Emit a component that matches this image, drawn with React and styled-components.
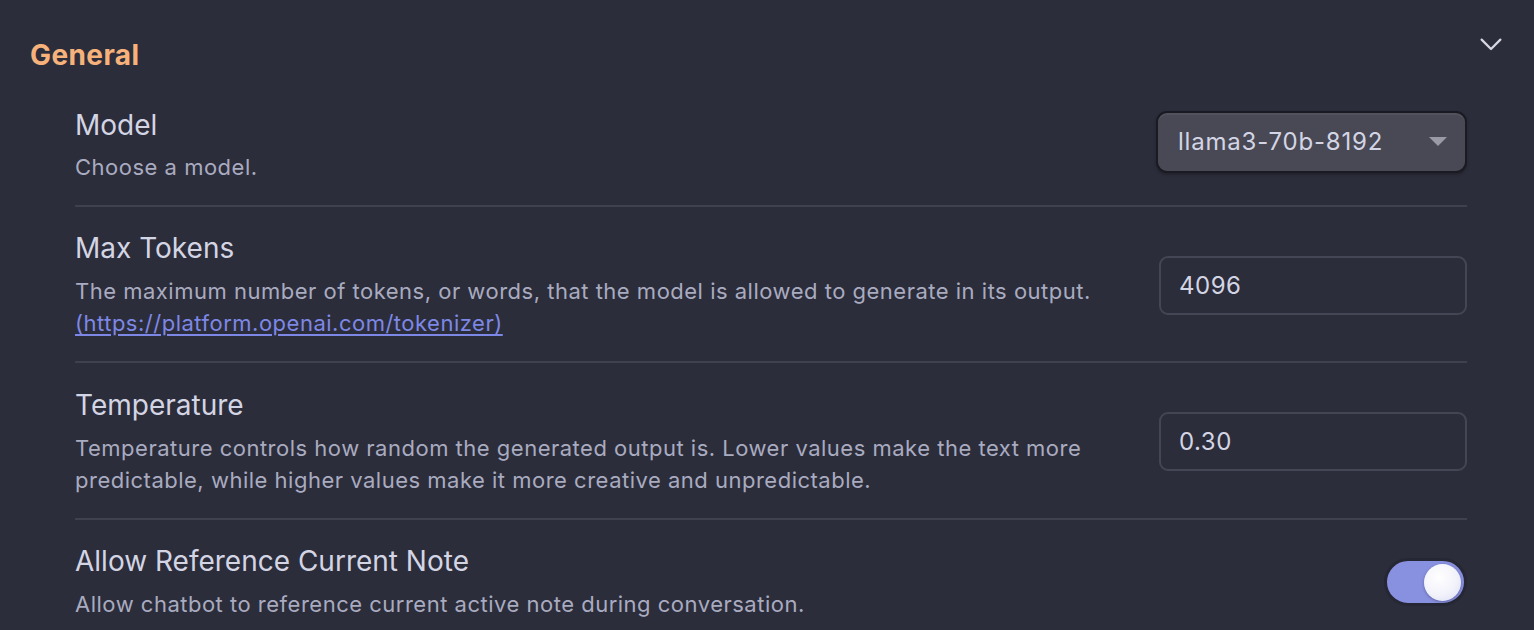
import React from "react";
import styled, { createGlobalStyle } from "styled-components";

const Global = createGlobalStyle`
  html, body { margin: 0; padding: 0; background: #2c2d3a; }
  body { font-family: Inter, "Noto Sans", sans-serif; }
  * { box-sizing: border-box; }
`;

const Page = styled.div`
  width: 1534px;
  height: 630px;
  overflow: hidden;
  background: #2c2d3a;
  padding: 0 0 0 30px;
`;

const SectionHeader = styled.div`
  display: flex;
  align-items: center;
  justify-content: space-between;
  height: 100px;
  padding-right: 28px;
  padding-top: 10px;
`;

const SectionTitle = styled.h2`
  margin: 0;
  font-size: 28px;
  font-weight: 700;
  color: #f6b27a;
  letter-spacing: 0.4px;
`;

const Chevron = styled.svg`
  width: 30px;
  height: 30px;
  margin-top: -22px;
`;

const List = styled.div`
  margin-left: 45px;
  width: 1392px;
`;

const Row = styled.div`
  display: flex;
  align-items: center;
  justify-content: space-between;
  min-height: ${(p) => p.$h}px;
  border-bottom: ${(p) => (p.$last ? "none" : "2px solid #3f414e")};
  padding: ${(p) => p.$pad || "0"};
`;

const Info = styled.div`
  display: flex;
  flex-direction: column;
  gap: ${(p) => p.$gap || 10}px;
`;

const Title = styled.div`
  font-size: 28px;
  color: #d4d5e4;
  letter-spacing: 0;
  line-height: 34px;
`;

const Desc = styled.div`
  font-size: 22px;
  color: #a9abc0;
  line-height: 32px;
  max-width: 1040px;
  letter-spacing: 0.5px;
`;

const Link = styled.a`
  color: #7d88e6;
  text-decoration: underline;
  text-underline-offset: 3px;
`;

const Select = styled.div`
  width: 311px;
  height: 62px;
  margin-top: -8px;
  border-radius: 11px;
  background: #484955;
  border: 2px solid #191a22;
  box-shadow: inset 0 2px 0 rgba(255,255,255,0.05), 0 2px 3px rgba(0,0,0,0.25);
  display: flex;
  align-items: center;
  justify-content: space-between;
  padding: 0 18px 0 20px;
  font-size: 24px;
  letter-spacing: 0.8px;
  color: #d4d5e4;
`;

const Caret = styled.span`
  width: 0;
  height: 0;
  border-left: 9px solid transparent;
  border-right: 9px solid transparent;
  border-top: 9px solid #9a9aa6;
`;

const Input = styled.div`
  width: 308px;
  height: 59px;
  border-radius: 9px;
  border: 2px solid #444656;
  display: flex;
  align-items: center;
  padding: 0 18px;
  font-size: 24px;
  letter-spacing: 0.5px;
  color: #d4d5e4;
`;

const Toggle = styled.div`
  width: 83px;
  height: 48px;
  border-radius: 24px;
  background: #8890e0;
  border: 3px solid #262734;
  display: flex;
  align-items: center;
  justify-content: flex-end;
  padding-right: 3px;
`;

const Knob = styled.div`
  width: 37px;
  height: 37px;
  border-radius: 50%;
  background: radial-gradient(circle at 40% 35%, #ffffff 0%, #f2f2fb 55%, #d9dbf3 100%);
  box-shadow: 0 1px 3px rgba(0,0,0,0.3);
`;

export default function App() {
  return (
    <>
      <Global />
      <Page>
        <SectionHeader>
          <SectionTitle>General</SectionTitle>
          <Chevron viewBox="0 0 24 24" fill="none" stroke="#d6d7e2" strokeWidth="1.8" strokeLinecap="round" strokeLinejoin="round">
            <path d="M4.5 8.5l7.5 7.5 7.5-7.5" />
          </Chevron>
        </SectionHeader>
        <List>
          <Row $h={107} $pad="0 0 14px 0">
            <Info $gap={9}>
              <Title>Model</Title>
              <Desc>Choose a model.</Desc>
            </Info>
            <Select>
              llama3-70b-8192
              <Caret />
            </Select>
          </Row>
          <Row $h={156} $pad="2px 0 0 0">
            <Info $gap={10}>
              <Title>Max Tokens</Title>
              <Desc>
                The maximum number of tokens, or words, that the model is allowed to generate in its output.
                <br />
                <Link>(https://platform.openai.com/tokenizer)</Link>
              </Desc>
            </Info>
            <Input>4096</Input>
          </Row>
          <Row $h={157} $pad="2px 0 0 0">
            <Info $gap={10}>
              <Title>Temperature</Title>
              <Desc>
                Temperature controls how random the generated output is. Lower values make the text more predictable, while higher values make it more creative and unpredictable.
              </Desc>
            </Info>
            <Input>0.30</Input>
          </Row>
          <Row $h={110} $last $pad="14px 0 0 0">
            <Info $gap={10}>
              <Title>Allow Reference Current Note</Title>
              <Desc>Allow chatbot to reference current active note during conversation.</Desc>
            </Info>
            <Toggle>
              <Knob />
            </Toggle>
          </Row>
        </List>
      </Page>
    </>
  );
}
